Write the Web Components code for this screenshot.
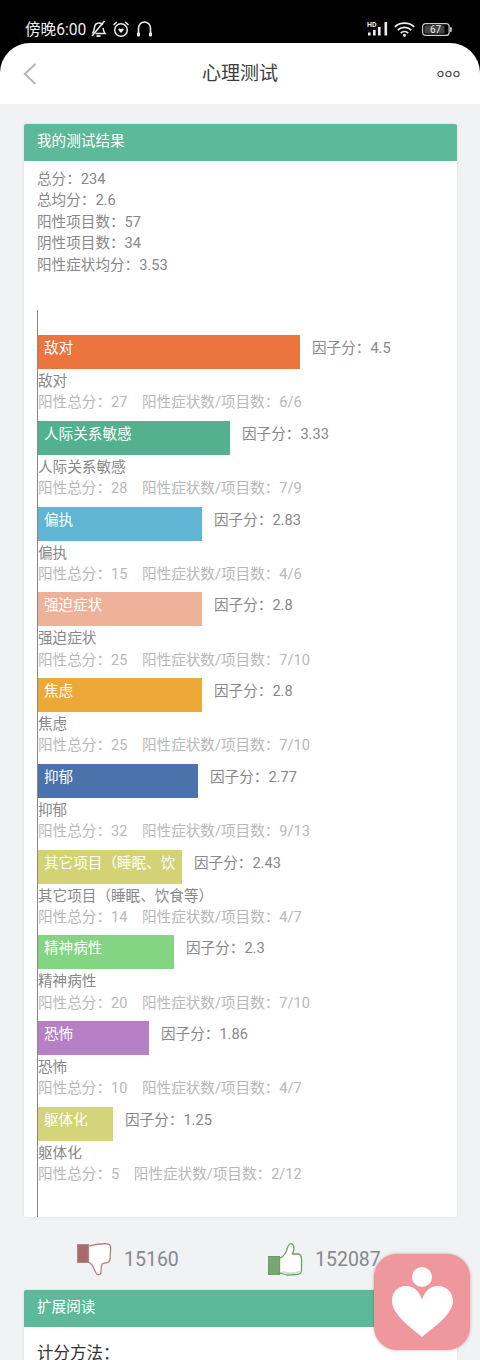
<!DOCTYPE html>
<html lang="zh"><head><meta charset="utf-8"><title>心理测试</title>
<style>
html,body{margin:0;padding:0;width:480px;height:1360px;overflow:hidden;background:#f1f2f4;font-family:Roboto,"Noto Sans CJK SC",sans-serif}
body{position:relative}
</style></head><body>
<status-header heading="心理测试"></status-header>
<main-page>
  <panel-card heading="我的测试结果">
    <stat-list>
      <div>总分：234</div><div>总均分：2.6</div><div>阳性项目数：57</div><div>阴性项目数：34</div><div>阳性症状均分：3.53</div>
    </stat-list>
    <factor-chart>
      <factor-row name="敌对" w="262" color="#ec743f" score="4.5" total="27" ratio="6/6"></factor-row>
      <factor-row name="人际关系敏感" w="192" color="#54b18f" score="3.33" total="28" ratio="7/9"></factor-row>
      <factor-row name="偏执" w="164" color="#5fb5d3" score="2.83" total="15" ratio="4/6"></factor-row>
      <factor-row name="强迫症状" w="164" color="#eeb29b" score="2.8" total="25" ratio="7/10"></factor-row>
      <factor-row name="焦虑" w="164" color="#eca938" score="2.8" total="25" ratio="7/10"></factor-row>
      <factor-row name="抑郁" w="160" color="#4a73ab" score="2.77" total="32" ratio="9/13"></factor-row>
      <factor-row name="其它项目（睡眠、饮食等）" bar="其它项目（睡眠、饮" w="144" color="#d3d275" score="2.43" total="14" ratio="4/7"></factor-row>
      <factor-row name="精神病性" w="136" color="#83d583" score="2.3" total="20" ratio="7/10"></factor-row>
      <factor-row name="恐怖" w="111" color="#b77fc5" score="1.86" total="10" ratio="4/7"></factor-row>
      <factor-row name="躯体化" w="75" color="#d3d47a" score="1.25" total="5" ratio="2/12"></factor-row>
    </factor-chart>
  </panel-card>
  <vote-row>
    <vote-item kind="down" count="15160"></vote-item>
    <vote-item kind="up" count="152087"></vote-item>
  </vote-row>
  <panel-card heading="扩展阅读">
    <reading-text>计分方法：</reading-text>
  </panel-card>
</main-page>
<float-badge></float-badge>
<script>
function def(name, css, html){
  customElements.define(name, class extends HTMLElement{
    connectedCallback(){
      if(this.shadowRoot) return;
      const r=this.attachShadow({mode:'open'});
      const a=n=>this.getAttribute(n)||'';
      r.innerHTML='<style>'+css+'</style>'+(typeof html==='function'?html(a):html);
    }
  });
}
def('status-header',`
:host{display:block;background:#000;color:#fff}
.bar{height:43px;box-sizing:border-box;padding:20px 28px 0 25px;display:flex;align-items:flex-start;justify-content:space-between}
.left,.right{display:flex;align-items:center;height:20px}
.left svg,.right svg{position:relative;top:-1px}
.time{font-size:15.6px;line-height:20px;color:#eee;margin-right:4px}
.left svg{display:block;flex:none}
.right svg{display:block;flex:none}
nav{height:61px;background:#fff;border-radius:30px 30px 0 0;display:grid;grid-template-columns:60px 1fr 60px;align-items:center}
h1{margin:0;font-weight:400;font-size:19px;line-height:24px;color:#3c3c3c;text-align:center;position:relative;top:.5px}
.back{margin-left:23px;display:block}
.more{justify-self:end;margin-right:20px;display:block}
`,a=>`
<div class="bar"><div class="left"><span class="time">傍晚6:00</span>
<svg width="17" height="18" viewBox="0 0 17 18" fill="none" stroke="#eee" stroke-width="1.500"><path d="M2.500 13.500c1.200-1.500 1.600-3 1.800-5C4.500 5 6.500 3 9 3c1.600 0 3 .8 3.600 2M13.100 8c.2 2.500.7 4 1.900 5.500H5.500"/><path d="M14.500 1 2 16"/><path d="M6.500 16h4" stroke-width="1.800"/></svg>
<svg width="18" height="18" viewBox="0 0 18 18" fill="none" stroke="#eee" stroke-width="1.500" style="margin-left:5px"><circle cx="9" cy="10" r="6.300"/><path d="M1.500 5 4.800 2M16.500 5l-3.300-3"/><path d="M9 13 6.600 10.300c-.9-1.200.9-2.600 2.400-1.100 1.500-1.500 3.300-.1 2.400 1.100z" fill="#eee" stroke="none"/></svg>
<svg width="17" height="18" viewBox="0 0 17 18" fill="none" stroke="#eee" stroke-width="1.600" style="margin-left:6px"><path d="M2.500 14V8a6 6 0 0 1 12 0v6"/><rect x="1" y="12.500" width="3" height="4" rx="1" fill="#eee" stroke="none"/><rect x="13" y="12.500" width="3" height="4" rx="1" fill="#eee" stroke="none"/></svg>
</div>
<div class="right">
<svg width="22" height="16" viewBox="0 0 22 16" fill="#eee"><text x="0" y="6" font-size="7" font-weight="700" font-family="Roboto,sans-serif">HD</text><rect x="1" y="11.500" width="2.600" height="3"/><rect x="6" y="9" width="2.600" height="5.500"/><rect x="11" y="6" width="2.600" height="8.500"/><rect x="17.500" y="1" width="2.600" height="13.500"/></svg>
<svg width="21" height="16" viewBox="0 0 21 16" fill="none" stroke="#eee" stroke-width="1.800" style="margin-left:5px"><path d="M.8 5.800C6 .8 15 .8 20.200 5.800M3.800 9c3.700-3.400 9.700-3.400 13.400 0M6.800 12c2.100-1.900 5.300-1.900 7.400 0"/><circle cx="10.500" cy="14.300" r="1.500" fill="#eee" stroke="none"/></svg>
<svg width="30" height="13" viewBox="0 0 30 13" style="margin-left:7px"><rect x=".6" y=".6" width="26.500" height="11.800" rx="3" fill="none" stroke="#ccc" stroke-width="1.200"/><rect x="2.500" y="2.500" width="20" height="8" rx="1" fill="#444"/><rect x="28" y="4" width="1.800" height="5" rx=".9" fill="#ccc"/><text x="13.500" y="10.300" text-anchor="middle" font-size="10" fill="#eee" font-family="Roboto,sans-serif">67</text></svg>
</div></div>
<nav>
<svg class="back" width="14" height="22" viewBox="0 0 14 22" fill="none" stroke="#b4b7bb" stroke-width="2"><path d="M12.500 1 1.800 11l10.700 10"/></svg>
<h1>${a('heading')}</h1>
<svg class="more" width="23" height="8" viewBox="0 0 23 8" fill="none" stroke="#555" stroke-width="1.200"><circle cx="3.500" cy="4" r="2.600"/><circle cx="11.500" cy="4" r="2.600"/><circle cx="19.500" cy="4" r="2.600"/></svg>
</nav>`);
def('main-page',`:host{display:block;padding:20px 23px 0 24px}`,'<slot></slot>');
def('panel-card',`
:host{display:block;background:#fff;box-shadow:0 0 3px rgba(0,0,0,.1);border-radius:2px;overflow:hidden}
header{height:37px;line-height:35px;padding-left:13px;background:#5cb99a;color:#fff;font-size:14.600px}
`,a=>`<header>${a('heading')}</header><slot></slot>`);
def('stat-list',`:host{display:block;box-sizing:content-box;padding:8px 13px 0;height:106px;font-size:14.600px;line-height:21.400px;color:#888}`,'<slot></slot>');
def('factor-chart',`:host{display:block;margin:35px 0 0 13px;padding-top:25px;height:882px;border-left:1.500px solid #888}`,'<slot></slot>');
def('factor-row',`
:host{display:block;height:85.750px;font-size:14.600px;color:#888}
.top{display:flex;align-items:flex-start;height:34px;gap:12px}
.bar{height:34px;box-sizing:border-box;padding:0 6px;line-height:27.500px;color:#fff;white-space:nowrap;overflow:hidden;flex:none}
.lab{line-height:21.400px;margin-top:2px;white-space:nowrap}
.sub{line-height:21.400px;color:#b8b8b8;white-space:nowrap}
.sub span{margin-left:14.600px}
.score{line-height:27.500px}
`,a=>`<div class="top"><div class="bar" style="width:${a('w')}px;background:${a('color')}">${a('bar')||a('name')}</div><div class="score">因子分：${a('score')}</div></div>
<div class="lab">${a('name')}</div><div class="sub">阳性总分：${a('total')}<span>阳性症状数/项目数：${a('ratio')}</span></div>`);
def('vote-row',`:host{display:grid;grid-template-columns:191px auto;height:73px;padding-left:53px;align-items:start;box-sizing:border-box;padding-top:26px}`,'<slot></slot>');
const ICONS={
 down:`<svg width="35" height="33" viewBox="0 0 35 33"><rect x=".5" y="1.500" width="11" height="18" fill="#a96b69" stroke="#b98583"/><path d="M11.500 3C16 2 21 .5 30 .8c3 .2 4 2.200 3.600 7L33 16c0 3-2 4-5 4l-3 1c-1 3-1 7-1 9-1 2.300-4 2.300-5 0-2-4-3-8-6-10l-1.500-1z" fill="#fff" stroke="#bd7f7d" stroke-width="1.300"/></svg>`,
 up:`<svg width="35" height="33" viewBox="0 0 35 33"><rect x=".5" y="13.500" width="11" height="18" fill="#78a872" stroke="#6c9c66"/><path d="M11.500 15c3 0 5-3 7-7 1-4 2-7 4-7.300 3-.4 4 3.300 3 7.300l-1 3h5c3 0 4 2 4 5v11c0 3-2 4.500-5 4.500l-9 .5c-3 0-5-2-8-2z" fill="#fff" stroke="#6fa069" stroke-width="1.300"/><path d="M14 29c6 1.500 13 1.500 18-.5" stroke="#cfe3cc" stroke-width="2" fill="none"/></svg>`
};
def('vote-item',`
:host{display:flex;align-items:flex-start;gap:12px;font-size:19.500px;line-height:33px;color:#888;height:33px}
svg{display:block;flex:none}
`,a=>ICONS[a('kind')]+`<span>${a('count')}</span>`);
def('reading-text',`:host{display:block;padding:16px 13px 0;font-size:16.500px;line-height:22px;color:#333}`,'<slot></slot>');
def('float-badge',`
:host{position:absolute;left:374px;top:1254px;width:96px;height:96px;border-radius:23px;background:#ee989e;box-shadow:0 0 3px rgba(120,60,60,.45);display:block}
svg{display:block}
`,`<svg width="96" height="96" viewBox="0 0 96 96"><circle cx="48" cy="23" r="10" fill="#fff"/><path d="M48 46C46 38 40 32 32 32 23 32 18 39 18 47 18 60 36 73 48 83 60 73 79 60 79 47 79 39 73 32 64 32 56 32 50 38 48 46Z" fill="#fff"/></svg>`);
</script>
</body></html>
